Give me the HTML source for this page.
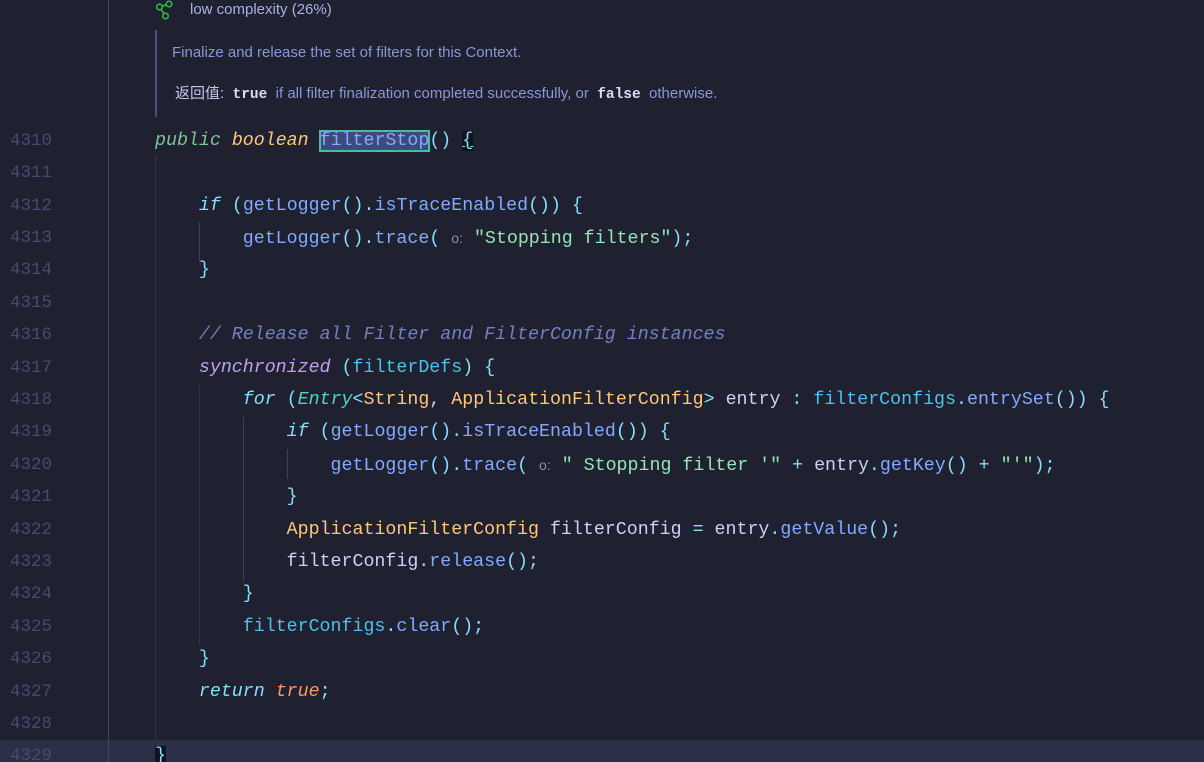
<!DOCTYPE html>
<html><head><meta charset="utf-8"><style>
html,body{margin:0;padding:0;width:1204px;height:762px;overflow:hidden;background:#1f2030;}
body{position:relative;font-family:"Liberation Mono",monospace;}
.gut{position:absolute;left:108px;top:0;width:1px;height:762px;background:#3b4170;}
.cur{position:absolute;left:0;top:740px;width:1204px;height:22px;background:#2c2f48;}
.ln{position:absolute;left:10px;width:60px;font-size:17.5px;color:#454b70;height:32.4px;line-height:32.4px;margin-top:2px}
.code{position:absolute;left:155px;font-size:18.3px;white-space:pre;height:32.4px;line-height:32.4px;color:#c8d3f5;margin-top:2px}
.guide{position:absolute;width:1px;background:#2f3352;}
.doc{position:absolute;font-family:"Liberation Sans","Noto Sans CJK SC",sans-serif;font-size:15px;color:#8a97d6;white-space:pre;}
.kw{color:#89ddff;font-style:italic}
.pub{color:#7ec699;font-style:italic}
.ty{color:#ffc777}
.tyi{color:#ffc777;font-style:italic}
.mt{color:#82aaff}
.p{color:#89ddff}
.fd{color:#4fc1e9}
.st{color:#95e6b4}
.cm{color:#7481c0;font-style:italic}
.sy{color:#c0a0f0;font-style:italic}
.en{color:#4fd6be;font-style:italic}
.tr{color:#ff966c;font-style:italic}
.h{color:#8890b0;font-size:14px;font-family:"Liberation Sans",sans-serif}
.sel{background:#3d4a7a;outline:2px solid #4fb8a8;outline-offset:-1px}
</style></head><body>
<div class="cur"></div>
<div class="gut"></div>
<div class="guide" style="left:155px;top:155px;height:585px"></div>
<div class="guide" style="left:199px;top:222px;height:40px;background:#3a3f60"></div>
<div class="guide" style="left:199px;top:385px;height:260px"></div>
<div class="guide" style="left:243px;top:417px;height:165px;background:#3a3f60"></div>
<div class="guide" style="left:287px;top:449px;height:30px;background:#3a3f60"></div>

<svg style="position:absolute;left:155px;top:0" width="20" height="22" viewBox="0 0 20 22"><g fill="none" stroke="#2fb84a" stroke-width="1.6"><circle cx="4.5" cy="7" r="2.8"/><circle cx="14" cy="4" r="2.8"/><circle cx="10.5" cy="16" r="2.8"/><path d="M7.2 6.2L11.3 4.9M6 9.5L9 13.5"/></g></svg>
<div class="doc" style="left:190px;top:1px;color:#a8b2e6">low complexity (26%)</div>
<div style="position:absolute;left:155px;top:30px;width:2px;height:87px;background:#474e80"></div>
<div class="doc" style="left:172px;top:44px">Finalize and release the set of filters for this Context.</div>
<div class="doc" style="left:175px;top:82px"><span style="color:#c0c8ee">返回值:</span>  <span style="font-family:'Liberation Mono',monospace;color:#d8ddf5;font-weight:bold;font-size:14.5px">true</span>  if all filter finalization completed successfully, or  <span style="font-family:'Liberation Mono',monospace;color:#d8ddf5;font-weight:bold;font-size:14.5px">false</span>  otherwise.</div>

<div class="ln" style="top:122.8px">4310</div><div class="code" style="top:122.8px"><span class="pub">public</span> <span class="tyi">boolean</span> <span class="mt sel">filterStop</span><span class="p">()</span> <span class="p" style="text-decoration:underline;background:#111320">{</span></div>
<div class="ln" style="top:155.2px">4311</div>
<div class="ln" style="top:187.6px">4312</div><div class="code" style="top:187.6px">    <span class="kw">if</span> <span class="p">(</span><span class="mt">getLogger</span><span class="p">().</span><span class="mt">isTraceEnabled</span><span class="p">())</span> <span class="p">{</span></div>
<div class="ln" style="top:220px">4313</div><div class="code" style="top:220px">        <span class="mt">getLogger</span><span class="p">().</span><span class="mt">trace</span><span class="p">(</span> <span class="h">o:</span> <span class="st">"Stopping filters"</span><span class="p">);</span></div>
<div class="ln" style="top:252.4px">4314</div><div class="code" style="top:252.4px">    <span class="p">}</span></div>
<div class="ln" style="top:284.8px">4315</div>
<div class="ln" style="top:317.2px">4316</div><div class="code" style="top:317.2px">    <span class="cm">// Release all Filter and FilterConfig instances</span></div>
<div class="ln" style="top:349.6px">4317</div><div class="code" style="top:349.6px">    <span class="sy">synchronized</span> <span class="p">(</span><span class="fd">filterDefs</span><span class="p">)</span> <span class="p">{</span></div>
<div class="ln" style="top:382px">4318</div><div class="code" style="top:382px">        <span class="kw">for</span> <span class="p">(</span><span class="en">Entry</span><span class="p">&lt;</span><span class="ty">String</span>, <span class="ty">ApplicationFilterConfig</span><span class="p">&gt;</span> entry <span class="p">:</span> <span class="fd">filterConfigs</span><span class="p">.</span><span class="mt">entrySet</span><span class="p">())</span> <span class="p">{</span></div>
<div class="ln" style="top:414.4px">4319</div><div class="code" style="top:414.4px">            <span class="kw">if</span> <span class="p">(</span><span class="mt">getLogger</span><span class="p">().</span><span class="mt">isTraceEnabled</span><span class="p">())</span> <span class="p">{</span></div>
<div class="ln" style="top:446.8px">4320</div><div class="code" style="top:446.8px">                <span class="mt">getLogger</span><span class="p">().</span><span class="mt">trace</span><span class="p">(</span> <span class="h">o:</span> <span class="st">" Stopping filter '"</span> <span class="p">+</span> entry<span class="p">.</span><span class="mt">getKey</span><span class="p">()</span> <span class="p">+</span> <span class="st">"'"</span><span class="p">);</span></div>
<div class="ln" style="top:479.2px">4321</div><div class="code" style="top:479.2px">            <span class="p">}</span></div>
<div class="ln" style="top:511.6px">4322</div><div class="code" style="top:511.6px">            <span class="ty">ApplicationFilterConfig</span> filterConfig <span class="p">=</span> entry<span class="p">.</span><span class="mt">getValue</span><span class="p">();</span></div>
<div class="ln" style="top:544px">4323</div><div class="code" style="top:544px">            filterConfig<span class="p">.</span><span class="mt">release</span><span class="p">();</span></div>
<div class="ln" style="top:576.4px">4324</div><div class="code" style="top:576.4px">        <span class="p">}</span></div>
<div class="ln" style="top:608.8px">4325</div><div class="code" style="top:608.8px">        <span class="fd">filterConfigs</span><span class="p">.</span><span class="mt">clear</span><span class="p">();</span></div>
<div class="ln" style="top:641.2px">4326</div><div class="code" style="top:641.2px">    <span class="p">}</span></div>
<div class="ln" style="top:673.6px">4327</div><div class="code" style="top:673.6px">    <span class="kw">return</span> <span class="tr">true</span><span class="p">;</span></div>
<div class="ln" style="top:706px">4328</div>
<div class="ln" style="top:738.4px">4329</div><div class="code" style="top:738.4px"><span class="p" style="background:#111320">}</span></div>
</body></html>
